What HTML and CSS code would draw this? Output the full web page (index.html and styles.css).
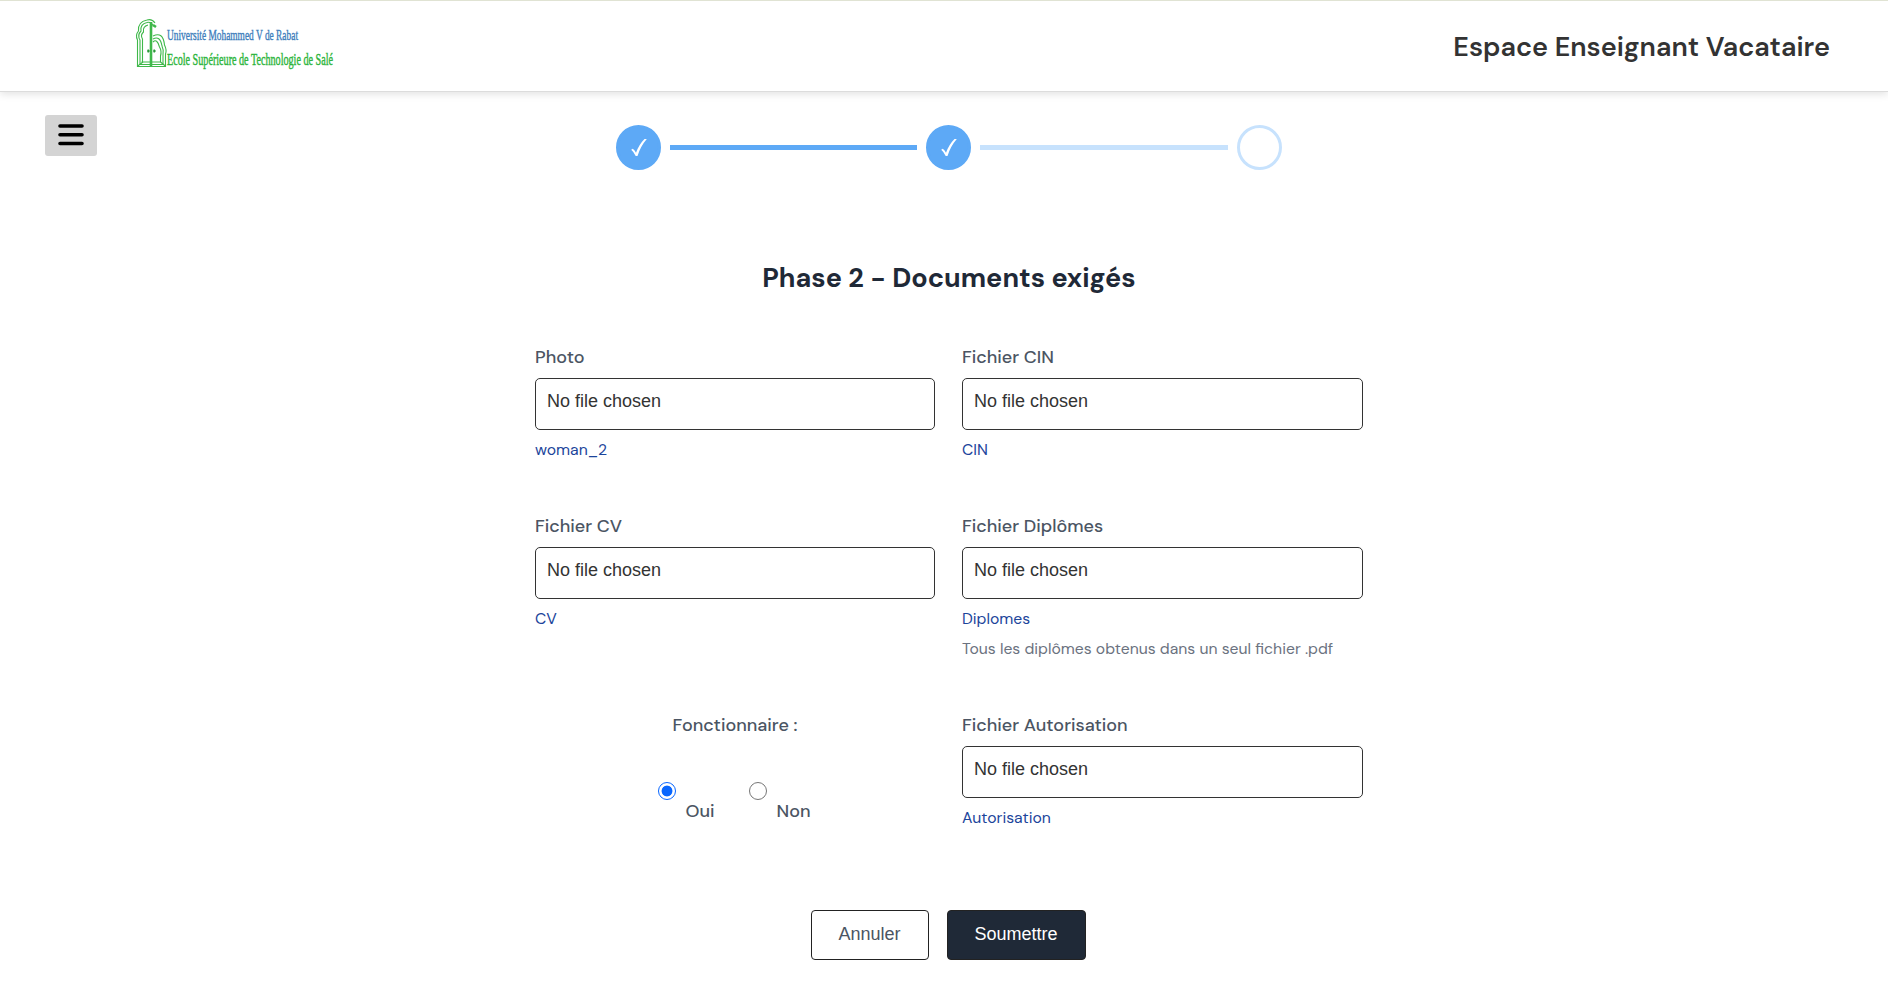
FILE: index.html
```html
<!DOCTYPE html>
<html lang="fr">
<head>
<meta charset="utf-8">
<title>Espace Enseignant Vacataire</title>
<link rel="stylesheet" href="styles.css">
</head>
<body>
<header class="header">
  <svg class="logo" width="210" height="60" viewBox="0 0 210 60">
    <g fill="none" stroke="#3fb84a" stroke-width="1.100">
      <path d="M1.500 49V23Q-1 18 2.500 14Q1.500 5 11 3Q16 1.500 19 6M4 47V23Q1 18 5 14Q4 7 11 5.500Q15 4.500 17.500 9M6.500 45V22Q4 18 7.500 15Q6.500 9.500 12 8"/>
      <path d="M17 19Q27 14 28.500 28Q31 33 29.500 37V49M17 22Q24 18 26 29Q28 33 27 38V47M17 25Q21 21 23.500 30Q26 34 24.500 39V45"/>
      <path d="M1 49.500H30M3 47.500H28M5.500 45H25"/>
      <path d="M1 49.500L7 45M30 49.500L24.500 45"/>
      <path stroke-width="2.600" d="M15 5V49M17 8L20 10"/>
    </g>
    <path fill="#2b9838" d="M12 32l2 2-2 2-1-2zM18 32l2 2-2 2-1-2z"/>
    <text class="logo-top" x="31" y="22.500" textLength="131" lengthAdjust="spacingAndGlyphs">Université Mohammed V de Rabat</text>
    <text class="logo-bottom" x="31" y="47.500" textLength="166" lengthAdjust="spacingAndGlyphs">Ecole Supérieure de Technologie de Salé</text>
  </svg>
  <h1 class="space-name">Espace Enseignant Vacataire</h1>
</header>
<main class="main">
  <button class="menu" aria-label="Menu">
    <svg width="26" height="22" viewBox="0 0 26 22"><path d="M2 2H24M2 10.750H24M2 19.500H24" stroke="#000" stroke-width="3.600" stroke-linecap="round"/></svg>
  </button>
  <div class="content">
    <div class="stepper">
      <span class="step done"><svg width="18" height="20" viewBox="0 0 18 20"><path d="M1.200 11.700L2.800 10.700Q4.800 12.300 6 14.700Q9 6.500 14.500 1H16.800Q10.500 8.300 7.500 18H5.700Q4 14 1.200 11.700Z" fill="#fff"/></svg></span>
      <span class="bar done"></span>
      <span class="step done"><svg width="18" height="20" viewBox="0 0 18 20"><path d="M1.200 11.700L2.800 10.700Q4.800 12.300 6 14.700Q9 6.500 14.500 1H16.800Q10.500 8.300 7.500 18H5.700Q4 14 1.200 11.700Z" fill="#fff"/></svg></span>
      <span class="bar"></span>
      <span class="step"></span>
    </div>
    <h2 class="title">Phase 2 - Documents exigés</h2>
    <form class="form">
      <div class="field"><label class="label">Photo</label><div class="file">No file chosen</div><a class="link">woman_2</a></div>
      <div class="field"><label class="label">Fichier CIN</label><div class="file">No file chosen</div><a class="link">CIN</a></div>
      <div class="field"><label class="label">Fichier CV</label><div class="file">No file chosen</div><a class="link">CV</a></div>
      <div class="field"><label class="label">Fichier Diplômes</label><div class="file">No file chosen</div><a class="link">Diplomes</a><span class="hint">Tous les diplômes obtenus dans un seul fichier .pdf</span></div>
      <div class="field official">
        <span class="label">Fonctionnaire :</span>
        <div class="choices">
          <span class="radio checked"></span><label class="choice">Oui</label>
          <span class="radio"></span><label class="choice">Non</label>
        </div>
      </div>
      <div class="field"><label class="label">Fichier Autorisation</label><div class="file">No file chosen</div><a class="link">Autorisation</a></div>
    </form>
    <div class="actions">
      <button class="btn">Annuler</button>
      <button class="btn primary">Soumettre</button>
    </div>
  </div>
</main>
</body>
</html>
```
FILE: styles.css
```css
* { box-sizing: border-box; }
body {
  margin: 0;
  height: 994px;
  overflow: hidden;
  background: #fff;
  color: #4b5563;
  font-family: "DM Sans", Inter, "Liberation Sans", sans-serif;
  font-optical-sizing: none;
}
.header {
  display: flex;
  justify-content: space-between;
  align-items: flex-start;
  height: 92px;
  padding: 16px 58px 0 136px;
  border-top: 1px solid #e0e3d3;
  border-bottom: 1px solid #dcdcdc;
  box-shadow: 0 2px 8px rgba(0, 0, 0, .12);
}
.logo { overflow: visible; font-family: "Liberation Serif", serif; }
.logo-top { font-size: 15px; fill: #3d7ebc; stroke: #3d7ebc; stroke-width: .4px; }
.logo-bottom { font-size: 17px; fill: #2db53c; stroke: #2db53c; stroke-width: .45px; }
.space-name {
  margin: 14px 0 0;
  color: #333;
  font-size: 27px;
  line-height: 32px;
  font-weight: 600;
  white-space: nowrap;
}
.main { display: flex; align-items: flex-start; padding: 23px 45px 0; }
.menu {
  display: grid;
  place-items: center;
  width: 52px;
  height: 41px;
  padding: 0 0 2px;
  border: 0;
  border-radius: 3px;
  background: #d4d4d4;
}
.content { width: 828px; margin: 10px 0 0 438px; }
.stepper { display: flex; align-items: center; gap: 9px; width: 666px; margin-left: 81px; }
.step {
  display: grid;
  place-items: center;
  flex: none;
  width: 45px;
  height: 45px;
  border: 3px solid #c7e2fd;
  border-radius: 50%;
}
.step.done { border-color: #5da9f6; background: #5da9f6; }
.bar { flex: 1; height: 5px; background: #c7e2fd; }
.bar.done { flex: none; width: 247px; background: #5da9f6; }
.title {
  margin: 92px 0 0;
  color: #1f2937;
  text-align: center;
  font-size: 27px;
  line-height: 32px;
  font-weight: 700;
}
.form {
  display: grid;
  grid-template-columns: 400px 401px;
  grid-template-rows: 169px 199px 169px;
  column-gap: 27px;
  margin-top: 52px;
}
.field { display: flex; flex-direction: column; }
.label, .choice { font-size: 18px; line-height: 22px; font-weight: 500; }
.label { margin-bottom: 10px; }
.file {
  height: 52px;
  margin-bottom: 9px;
  padding: 12px 11px;
  border: 1px solid #333;
  border-radius: 5px;
  color: #333;
  font: 18px/21px "Liberation Sans", Arial, sans-serif;
}
.link, .hint { font-size: 15.75px; line-height: 22px; white-space: nowrap; }
.link { color: #1c459b; }
.hint { margin-top: 8px; color: #6b7280; }
.official { align-items: center; }
.choices { display: flex; align-items: flex-start; margin: 36px 3px 0 0; }
.radio { width: 18px; height: 18px; border: 1.500px solid #767676; border-radius: 50%; }
.radio.checked { border-color: #0866ff; background: radial-gradient(circle, #0866ff 5px, #fff 5.800px); }
.choice { width: 63px; margin: 18px 0 0 10px; }
.choices .choice:last-child { width: 33px; }
.actions { display: flex; justify-content: center; gap: 18px; margin: 27px 0 0 -2px; }
.btn {
  width: 118px;
  height: 50px;
  padding: 0 0 2px;
  border: 1px solid #222;
  border-radius: 4px;
  background: #fff;
  color: #4b5563;
  font: 18px/21px "Liberation Sans", Arial, sans-serif;
}
.btn.primary { width: 139px; background: #1f2937; color: #fff; }
```
